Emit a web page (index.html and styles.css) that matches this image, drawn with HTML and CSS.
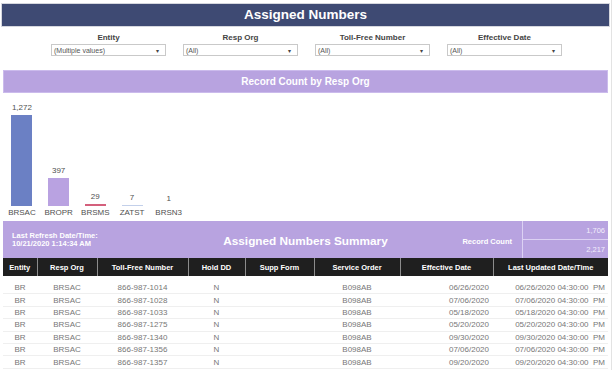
FILE: index.html
```html
<!DOCTYPE html>
<html lang="en">
<head>
    <meta charset="UTF-8">
    <title>Assigned Numbers</title>
    <link rel="stylesheet" href="styles.css">
</head>
<body>
<div class="page">
    <header class="title-bar">Assigned Numbers</header>

    <div class="filters">
        <div class="filter">
            <label>Entity</label>
            <div class="select"><span>(Multiple values)</span><span class="arrow">&#9662;</span></div>
        </div>
        <div class="filter">
            <label>Resp Org</label>
            <div class="select"><span>(All)</span><span class="arrow">&#9662;</span></div>
        </div>
        <div class="filter">
            <label>Toll-Free Number</label>
            <div class="select"><span>(All)</span><span class="arrow">&#9662;</span></div>
        </div>
        <div class="filter">
            <label>Effective Date</label>
            <div class="select"><span>(All)</span><span class="arrow">&#9662;</span></div>
        </div>
    </div>

    <div class="band-header">Record Count by Resp Org</div>
    <div class="chart">
        <div class="col">
            <span class="val">1,272</span>
            <div class="bar blue" style="height: 91px"></div>
            <span class="cat">BRSAC</span>
        </div>
        <div class="col">
            <span class="val">397</span>
            <div class="bar purple" style="height: 28.4px"></div>
            <span class="cat">BROPR</span>
        </div>
        <div class="col">
            <span class="val">29</span>
            <div class="bar red" style="height: 2px"></div>
            <span class="cat">BRSMS</span>
        </div>
        <div class="col">
            <span class="val">7</span>
            <div class="bar light" style="height: 1px"></div>
            <span class="cat">ZATST</span>
        </div>
        <div class="col">
            <span class="val">1</span>
            <div class="bar light" style="height: 0"></div>
            <span class="cat">BRSN3</span>
        </div>
    </div>

    <div class="summary">
        <div class="refresh">Last Refresh Date/Time:<br>10/21/2020 1:14:34 AM</div>
        <h2>Assigned Numbers Summary</h2>
        <div class="counts">
            <span class="count-label">Record Count</span>
            <div class="count-boxes">
                <div>1,706</div>
                <div>2,217</div>
            </div>
        </div>
    </div>

    <table class="records">
        <colgroup>
            <col style="width: 34px"><col style="width: 60px"><col style="width: 91px"><col style="width: 57px">
            <col style="width: 69px"><col style="width: 86px"><col style="width: 93px"><col style="width: 115px">
        </colgroup>
        <thead>
            <tr>
                <th>Entity</th><th>Resp Org</th><th>Toll-Free Number</th><th>Hold DD</th>
                <th>Supp Form</th><th>Service Order</th><th>Effective Date</th><th>Last Updated Date/Time</th>
            </tr>
        </thead>
        <tbody>
            <tr><td>BR</td><td>BRSAC</td><td>866-987-1014</td><td>N</td><td></td><td>B098AB</td><td class="r">06/26/2020</td><td class="r">06/26/2020 04:30:00&nbsp; PM</td></tr>
            <tr><td>BR</td><td>BRSAC</td><td>866-987-1028</td><td>N</td><td></td><td>B098AB</td><td class="r">07/06/2020</td><td class="r">07/06/2020 04:30:00&nbsp; PM</td></tr>
            <tr><td>BR</td><td>BRSAC</td><td>866-987-1033</td><td>N</td><td></td><td>B098AB</td><td class="r">05/18/2020</td><td class="r">05/18/2020 04:30:00&nbsp; PM</td></tr>
            <tr><td>BR</td><td>BRSAC</td><td>866-987-1275</td><td>N</td><td></td><td>B098AB</td><td class="r">05/20/2020</td><td class="r">05/20/2020 04:30:00&nbsp; PM</td></tr>
            <tr><td>BR</td><td>BRSAC</td><td>866-987-1340</td><td>N</td><td></td><td>B098AB</td><td class="r">09/30/2020</td><td class="r">09/30/2020 04:30:00&nbsp; PM</td></tr>
            <tr><td>BR</td><td>BRSAC</td><td>866-987-1356</td><td>N</td><td></td><td>B098AB</td><td class="r">07/06/2020</td><td class="r">07/06/2020 04:30:00&nbsp; PM</td></tr>
            <tr><td>BR</td><td>BRSAC</td><td>866-987-1357</td><td>N</td><td></td><td>B098AB</td><td class="r">09/20/2020</td><td class="r">09/20/2020 04:30:00&nbsp; PM</td></tr>
        </tbody>
    </table>
</div>
</body>
</html>
```

FILE: styles.css
```css
body { margin: 0; font-family: "Liberation Sans", Arial, sans-serif; background: #fff; color: #333; overflow: hidden; }
.page { box-sizing: border-box; width: 612px; min-height: 370px; padding: 4px 3px 0 3px; border-right: 1px solid #e3e3e3; }

.title-bar { margin: 0 -1px; height: 22px; line-height: 22px; background: #3e4a73; color: #fff; font-weight: bold; font-size: 13.5px; text-align: center; box-shadow: 0 0 0 1px #d5d7de; }

.filters { display: flex; gap: 17px; padding-left: 48px; margin-top: 7px; }
.filter { width: 115px; display: flex; flex-direction: column; align-items: center; }
.filter label { font-size: 8px; font-weight: bold; color: #444; line-height: 9px; height: 11px; }
.select { box-sizing: border-box; width: 115px; height: 12px; border: 1px solid #c9c9c9; display: flex; justify-content: space-between; align-items: center; padding: 0 6px 0 2px; font-size: 7px; color: #555; }
.select .arrow { font-size: 6px; color: #444; }

.band-header { margin-top: 14px; height: 23px; line-height: 23px; background: #b8a3e0; box-shadow: inset 0 0 0 1px #cbbbec; color: #fff; font-weight: bold; font-size: 10px; text-align: center; }

.chart { height: 128px; box-sizing: border-box; padding: 0 0 3px 0.6px; display: grid; grid-template-columns: repeat(5, 36.7px); align-items: end; }
.col { display: flex; flex-direction: column; align-items: center; }
.val, .cat { font-size: 8px; line-height: 10px; color: #4f4f4f; }
.val { margin-bottom: 2px; }
.cat { margin-top: 2px; }
.bar { width: 21px; }
.blue { background: #6b80c4; }
.purple { background: #b9a2e1; }
.red { background: #d4607c; }
.light { background: #c3d0ea; }

.summary { height: 37px; background: #b8a3e0; display: grid; grid-template-columns: 1fr auto 1fr; align-items: center; color: #fff; }
.refresh { padding-left: 9px; font-size: 7.5px; font-weight: bold; line-height: 8.5px; margin-top: 1px; }
.summary h2 { margin: 3px 0 0; font-size: 11.8px; font-weight: bold; }
.counts { display: flex; justify-content: flex-end; align-items: center; height: 100%; }
.count-label { font-size: 7.5px; font-weight: bold; margin-right: 10px; margin-top: 3px; }
.count-boxes { width: 85px; height: 100%; border-left: 1px solid #dcd1f3; display: flex; flex-direction: column; }
.count-boxes div { flex: 1; text-align: right; padding-right: 3px; font-size: 7.5px; color: #f3eefc; display: flex; align-items: center; justify-content: flex-end; }
.count-boxes div + div { border-top: 1px solid #dcd1f3; }

.records { width: 605px; table-layout: fixed; border-collapse: collapse; font-size: 8px; }
.records th { height: 18px; padding: 0; background: #1f1f1f; color: #fff; font-weight: bold; font-size: 7.5px; text-align: center; border-left: 1px solid #8c8c8c; }
.records th:first-child { border-left: none; }
.records tbody tr:first-child td { border-top: 6px solid #fff; }
.records td { height: 11.4px; padding: 0; line-height: 11px; text-align: center; color: #777; border-bottom: 1px solid #efefef; white-space: nowrap; }
.records td.r { text-align: right; padding-right: 4px; }
.records td:last-child { padding-right: 3px; }
```
